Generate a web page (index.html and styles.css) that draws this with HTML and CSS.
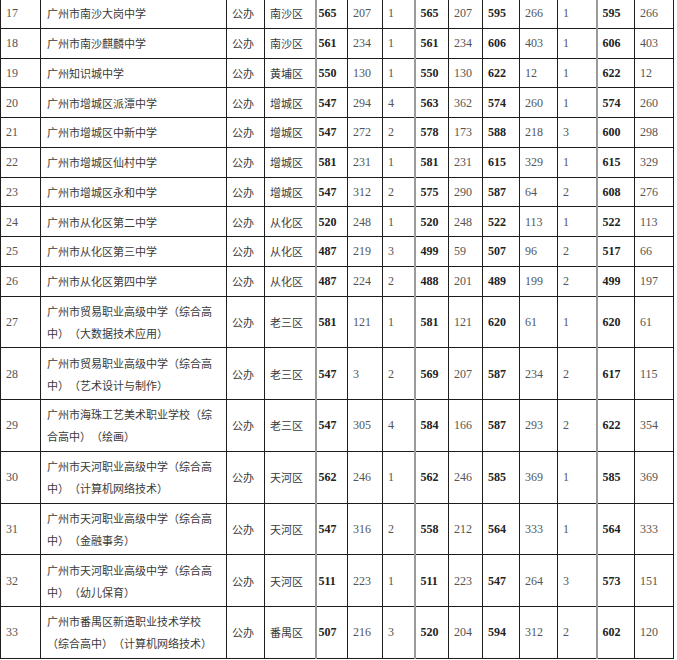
FILE: index.html
```html
<!DOCTYPE html>
<html lang="zh-CN">
<head>
<meta charset="utf-8">
<title>广州市普通高中录取分数</title>
<link rel="stylesheet" href="styles.css">
</head>
<body>
<table class="scores">
  <colgroup>
    <col class="c-idx"><col class="c-name"><col class="c-type"><col class="c-dist">
    <col class="c-s1"><col class="c-r1"><col class="c-n1"><col class="c-s2"><col class="c-r2">
    <col class="c-s3"><col class="c-r3"><col class="c-n3"><col class="c-s4"><col class="c-r4">
  </colgroup>
  <tbody>
    <tr><td class="num">17</td><td class="name">广州市南沙大岗中学</td><td>公办</td><td>南沙区</td><td class="b g s1">565</td><td class="num">207</td><td class="num">1</td><td class="b g">565</td><td class="num">207</td><td class="b">595</td><td class="num">266</td><td class="num">1</td><td class="b g">595</td><td class="num">266</td></tr>
    <tr><td class="num">18</td><td class="name">广州市南沙麒麟中学</td><td>公办</td><td>南沙区</td><td class="b g s1">561</td><td class="num">234</td><td class="num">1</td><td class="b g">561</td><td class="num">234</td><td class="b">606</td><td class="num">403</td><td class="num">1</td><td class="b g">606</td><td class="num">403</td></tr>
    <tr><td class="num">19</td><td class="name">广州知识城中学</td><td>公办</td><td>黄埔区</td><td class="b g s1">550</td><td class="num">130</td><td class="num">1</td><td class="b g">550</td><td class="num">130</td><td class="b">622</td><td class="num">12</td><td class="num">1</td><td class="b g">622</td><td class="num">12</td></tr>
    <tr><td class="num">20</td><td class="name">广州市增城区派潭中学</td><td>公办</td><td>增城区</td><td class="b g s1">547</td><td class="num">294</td><td class="num">4</td><td class="b g">563</td><td class="num">362</td><td class="b">574</td><td class="num">260</td><td class="num">1</td><td class="b g">574</td><td class="num">260</td></tr>
    <tr><td class="num">21</td><td class="name">广州市增城区中新中学</td><td>公办</td><td>增城区</td><td class="b g s1">547</td><td class="num">272</td><td class="num">2</td><td class="b g">578</td><td class="num">173</td><td class="b">588</td><td class="num">218</td><td class="num">3</td><td class="b g">600</td><td class="num">298</td></tr>
    <tr><td class="num">22</td><td class="name">广州市增城区仙村中学</td><td>公办</td><td>增城区</td><td class="b g s1">581</td><td class="num">231</td><td class="num">1</td><td class="b g">581</td><td class="num">231</td><td class="b">615</td><td class="num">329</td><td class="num">1</td><td class="b g">615</td><td class="num">329</td></tr>
    <tr><td class="num">23</td><td class="name">广州市增城区永和中学</td><td>公办</td><td>增城区</td><td class="b g s1">547</td><td class="num">312</td><td class="num">2</td><td class="b g">575</td><td class="num">290</td><td class="b">587</td><td class="num">64</td><td class="num">2</td><td class="b g">608</td><td class="num">276</td></tr>
    <tr><td class="num">24</td><td class="name">广州市从化区第二中学</td><td>公办</td><td>从化区</td><td class="b g s1">520</td><td class="num">248</td><td class="num">1</td><td class="b g">520</td><td class="num">248</td><td class="b">522</td><td class="num">113</td><td class="num">1</td><td class="b g">522</td><td class="num">113</td></tr>
    <tr><td class="num">25</td><td class="name">广州市从化区第三中学</td><td>公办</td><td>从化区</td><td class="b g s1">487</td><td class="num">219</td><td class="num">3</td><td class="b g">499</td><td class="num">59</td><td class="b">507</td><td class="num">96</td><td class="num">2</td><td class="b g">517</td><td class="num">66</td></tr>
    <tr><td class="num">26</td><td class="name">广州市从化区第四中学</td><td>公办</td><td>从化区</td><td class="b g s1">487</td><td class="num">224</td><td class="num">2</td><td class="b g">488</td><td class="num">201</td><td class="b">489</td><td class="num">199</td><td class="num">2</td><td class="b g">499</td><td class="num">197</td></tr>
    <tr><td class="num">27</td><td class="name">广州市贸易职业高级中学（综合高中）（大数据技术应用）</td><td>公办</td><td>老三区</td><td class="b g s1">581</td><td class="num">121</td><td class="num">1</td><td class="b g">581</td><td class="num">121</td><td class="b">620</td><td class="num">61</td><td class="num">1</td><td class="b g">620</td><td class="num">61</td></tr>
    <tr><td class="num">28</td><td class="name">广州市贸易职业高级中学（综合高中）（艺术设计与制作）</td><td>公办</td><td>老三区</td><td class="b g s1">547</td><td class="num">3</td><td class="num">2</td><td class="b g">569</td><td class="num">207</td><td class="b">587</td><td class="num">234</td><td class="num">2</td><td class="b g">617</td><td class="num">115</td></tr>
    <tr><td class="num">29</td><td class="name">广州市海珠工艺美术职业学校（综合高中）（绘画）</td><td>公办</td><td>老三区</td><td class="b g s1">547</td><td class="num">305</td><td class="num">4</td><td class="b g">584</td><td class="num">166</td><td class="b">587</td><td class="num">293</td><td class="num">2</td><td class="b g">622</td><td class="num">354</td></tr>
    <tr><td class="num">30</td><td class="name">广州市天河职业高级中学（综合高中）（计算机网络技术）</td><td>公办</td><td>天河区</td><td class="b g s1">562</td><td class="num">246</td><td class="num">1</td><td class="b g">562</td><td class="num">246</td><td class="b">585</td><td class="num">369</td><td class="num">1</td><td class="b g">585</td><td class="num">369</td></tr>
    <tr><td class="num">31</td><td class="name">广州市天河职业高级中学（综合高中）（金融事务）</td><td>公办</td><td>天河区</td><td class="b g s1">547</td><td class="num">316</td><td class="num">2</td><td class="b g">558</td><td class="num">212</td><td class="b">564</td><td class="num">333</td><td class="num">1</td><td class="b g">564</td><td class="num">333</td></tr>
    <tr><td class="num">32</td><td class="name">广州市天河职业高级中学（综合高中）（幼儿保育）</td><td>公办</td><td>天河区</td><td class="b g s1">511</td><td class="num">223</td><td class="num">1</td><td class="b g">511</td><td class="num">223</td><td class="b">547</td><td class="num">264</td><td class="num">3</td><td class="b g">573</td><td class="num">151</td></tr>
    <tr><td class="num">33</td><td class="name">广州市番禺区新造职业技术学校（综合高中）（计算机网络技术）</td><td>公办</td><td>番禺区</td><td class="b g s1">507</td><td class="num">216</td><td class="num">3</td><td class="b g">520</td><td class="num">204</td><td class="b">594</td><td class="num">312</td><td class="num">2</td><td class="b g">602</td><td class="num">120</td></tr>
  </tbody>
</table>
</body>
</html>
```

FILE: styles.css
```css
html, body {
  margin: 0;
  padding: 0;
  background: #ffffff;
}

.scores {
  border-collapse: collapse;
  table-layout: fixed;
  width: 674px;
  margin-top: -2px;
  font-family: "Noto Sans CJK SC", "Liberation Serif", sans-serif;
  font-size: 11px;
  color: #3a3a3a;
  text-spacing-trim: space-all;
}

.c-idx { width: 40px; }
.c-name { width: 186px; }
.c-type { width: 38px; }
.c-dist { width: 51px; }
.c-s1 { width: 32px; }
.c-r1 { width: 35px; }
.c-n1 { width: 32px; }
.c-s2 { width: 34px; }
.c-r2 { width: 34px; }
.c-s3 { width: 37px; }
.c-r3 { width: 38px; }
.c-n3 { width: 39px; }
.c-s4 { width: 38px; }
.c-r4 { width: 39px; }

.scores td {
  border: 1px solid #1e1e1e;
  padding: 3.375px 2px 3.375px 5px;
  line-height: 22px;
  vertical-align: middle;
  text-align: left;
  white-space: normal;
  overflow: hidden;
}

.scores td.name {
  padding-left: 6px;
  padding-right: 6px;
  text-spacing-trim: space-all;
}

.scores td.num {
  font-family: "Liberation Serif", serif;
  font-size: 12px;
  color: #555555;
}

.scores td.b {
  font-family: "Liberation Serif", serif;
  font-size: 12px;
  font-weight: bold;
  color: #222222;
}

.scores td.s1 {
  padding-left: 2px;
}

.scores td.g {
  border-left: 2px solid #9a9a9a;
}
```
